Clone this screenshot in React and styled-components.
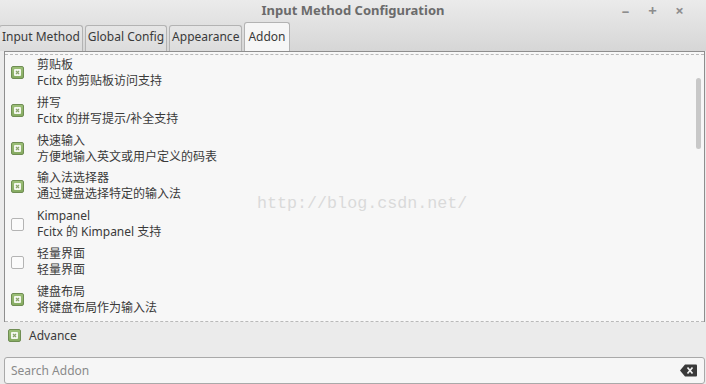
import React from "react";
import styled, { createGlobalStyle } from "styled-components";

const Global = createGlobalStyle`
  html, body { margin: 0; padding: 0; }
  body {
    width: 706px; height: 384px; overflow: hidden;
    background: #ebebeb;
    font-family: "Noto Sans", "Noto Sans CJK SC", sans-serif;
    color: #3c3c3c;
  }
`;

const Window = styled.div`
  width: 706px; height: 384px;
  display: flex; flex-direction: column;
  background: #ebebeb;
`;

const Header = styled.div`
  background: linear-gradient(#ebebeb, #d6d6d6);
  display: flex; flex-direction: column;
  height: 51px;
`;

const TitleBar = styled.div`
  height: 20px;
  position: relative;
  display: flex; align-items: center; justify-content: center;
  font-size: 13px; font-weight: bold; color: #6b6b6b;
`;

const Controls = styled.div`
  position: absolute; right: 20px; top: 0; height: 20px;
  display: flex; align-items: center; gap: 14px;
  color: #8d8d8d; font-size: 15px; font-weight: bold;
`;

const Ctl = styled.span`
  width: 13px; text-align: center; line-height: 1;
`;

const TabRow = styled.div`
  flex: 1;
  display: flex; align-items: flex-end; gap: 2px;
`;

const Tab = styled.div`
  height: ${p => (p.$active ? 29 : 26)}px;
  box-sizing: border-box;
  padding: ${p => (p.$active ? 3 : 0)}px ${p => p.$pad}px 4px;
  display: flex; align-items: center;
  border: 1px solid #b3b3b3; border-bottom: none;
  border-radius: 3px 3px 0 0;
  background: ${p => (p.$active ? "#f6f6f6" : "linear-gradient(#e6e6e6, #dcdcdc)")};
  font-size: 12px; color: #3a3a3a;
  margin-left: ${p => p.$ml || 0}px;
`;

const Frame = styled.div`
  position: relative;
  margin: 0 1px 0 4px;
  height: 271px;
  box-sizing: border-box;
  border: 1px solid #8e8e8e;
  border-bottom: none;
  background: #f7f7f7;
  overflow: hidden;
`;

const Dashed = styled.div`
  box-sizing: border-box;
  border-top: 1px dashed #b9b9b9;
  border-bottom: 1px dashed #b9b9b9;
  margin-top: 2px;
  height: calc(100% - 2px);
`;

const Row = styled.div`
  height: 37.85px;
  box-sizing: border-box;
  padding: 0 0 2px 6px;
  display: flex; align-items: center;
  gap: 13px;
`;

const Texts = styled.div`
  display: flex; flex-direction: column;
  font-size: 12px; line-height: 16px; color: #3a3a3a;
`;

const Box = styled.div`
  width: 13px; height: 13px; box-sizing: border-box;
  border-radius: 2px;
  flex: none;
  display: flex; align-items: center; justify-content: center;
  ${p =>
    p.$checked
      ? "border: 1px solid #6f8d53; background: linear-gradient(#9cbf78, #86ab62);"
      : "border: 1px solid #b4b4b4; background: #fbfbfb;"}
`;

const Scroll = styled.div`
  position: absolute; right: 3px; top: 26px;
  width: 5px; height: 71px; border-radius: 3px;
  background: #c8c8c8;
`;

const Watermark = styled.div`
  position: absolute; left: 252px; top: 142px;
  font-family: "Liberation Mono", monospace;
  font-size: 16.7px; color: #dadada;
`;

const AdvanceRow = styled.div`
  height: 27px;
  display: flex; align-items: center;
  padding-left: 8px; gap: 8px;
  font-size: 12px; color: #3a3a3a;
`;

const Search = styled.div`
  margin: 8px 1px 0 4px;
  height: 27px; box-sizing: border-box;
  border: 1px solid #a9a9a9; border-radius: 3px;
  background: #f6f6f6;
  display: flex; align-items: center; justify-content: space-between;
  padding: 0 7px 0 6px;
  font-size: 12px; color: #8a8a8a;
`;

const Check = ({ checked }) => (
  <Box $checked={checked}>
    {checked && (
      <svg width="7" height="7" viewBox="0 0 7 7">
        <rect x="0" y="0" width="7" height="7" rx="1" fill="#f4f7ef" />
        <path d="M2 2 L5 5 M5 2 L2 5" stroke="#8aa36c" strokeWidth="1.2" />
      </svg>
    )}
  </Box>
);

const ClearIcon = () => (
  <svg width="17" height="13" viewBox="0 0 17 13">
    <path d="M5 0.5 H16 a1 1 0 0 1 1 1 V11.5 a1 1 0 0 1 -1 1 H5 L0 6.5 Z" fill="#3a3a3a" />
    <path d="M7.5 3.5 L12.5 9.5 M12.5 3.5 L7.5 9.5" stroke="#f4f4f4" strokeWidth="1.7" />
  </svg>
);

const addons = [
  ["剪贴板", "Fcitx 的剪贴板访问支持", true],
  ["拼写", "Fcitx 的拼写提示/补全支持", true],
  ["快速输入", "方便地输入英文或用户定义的码表", true],
  ["输入法选择器", "通过键盘选择特定的输入法", true],
  ["Kimpanel", "Fcitx 的 Kimpanel 支持", false],
  ["轻量界面", "轻量界面", false],
  ["键盘布局", "将键盘布局作为输入法", true],
];

export default function App() {
  return (
    <Window>
      <Global />
      <Header>
        <TitleBar>
          Input Method Configuration
          <Controls>
            <Ctl>–</Ctl>
            <Ctl>+</Ctl>
            <Ctl>×</Ctl>
          </Controls>
        </TitleBar>
        <TabRow>
          <Tab $pad={2} $ml={-1}>Input Method</Tab>
          <Tab $pad={2}>Global Config</Tab>
          <Tab $pad={2}>Appearance</Tab>
          <Tab $pad={3} $active>Addon</Tab>
        </TabRow>
      </Header>
      <Frame>
        <Dashed>
          {addons.map(([t, d, c]) => (
            <Row key={t}>
              <Check checked={c} />
              <Texts>
                <span>{t}</span>
                <span>{d}</span>
              </Texts>
            </Row>
          ))}
        </Dashed>
        <Scroll />
        <Watermark>http://blog.csdn.net/</Watermark>
      </Frame>
      <AdvanceRow>
        <Check checked />
        Advance
      </AdvanceRow>
      <Search>
        <span>Search Addon</span>
        <ClearIcon />
      </Search>
    </Window>
  );
}
